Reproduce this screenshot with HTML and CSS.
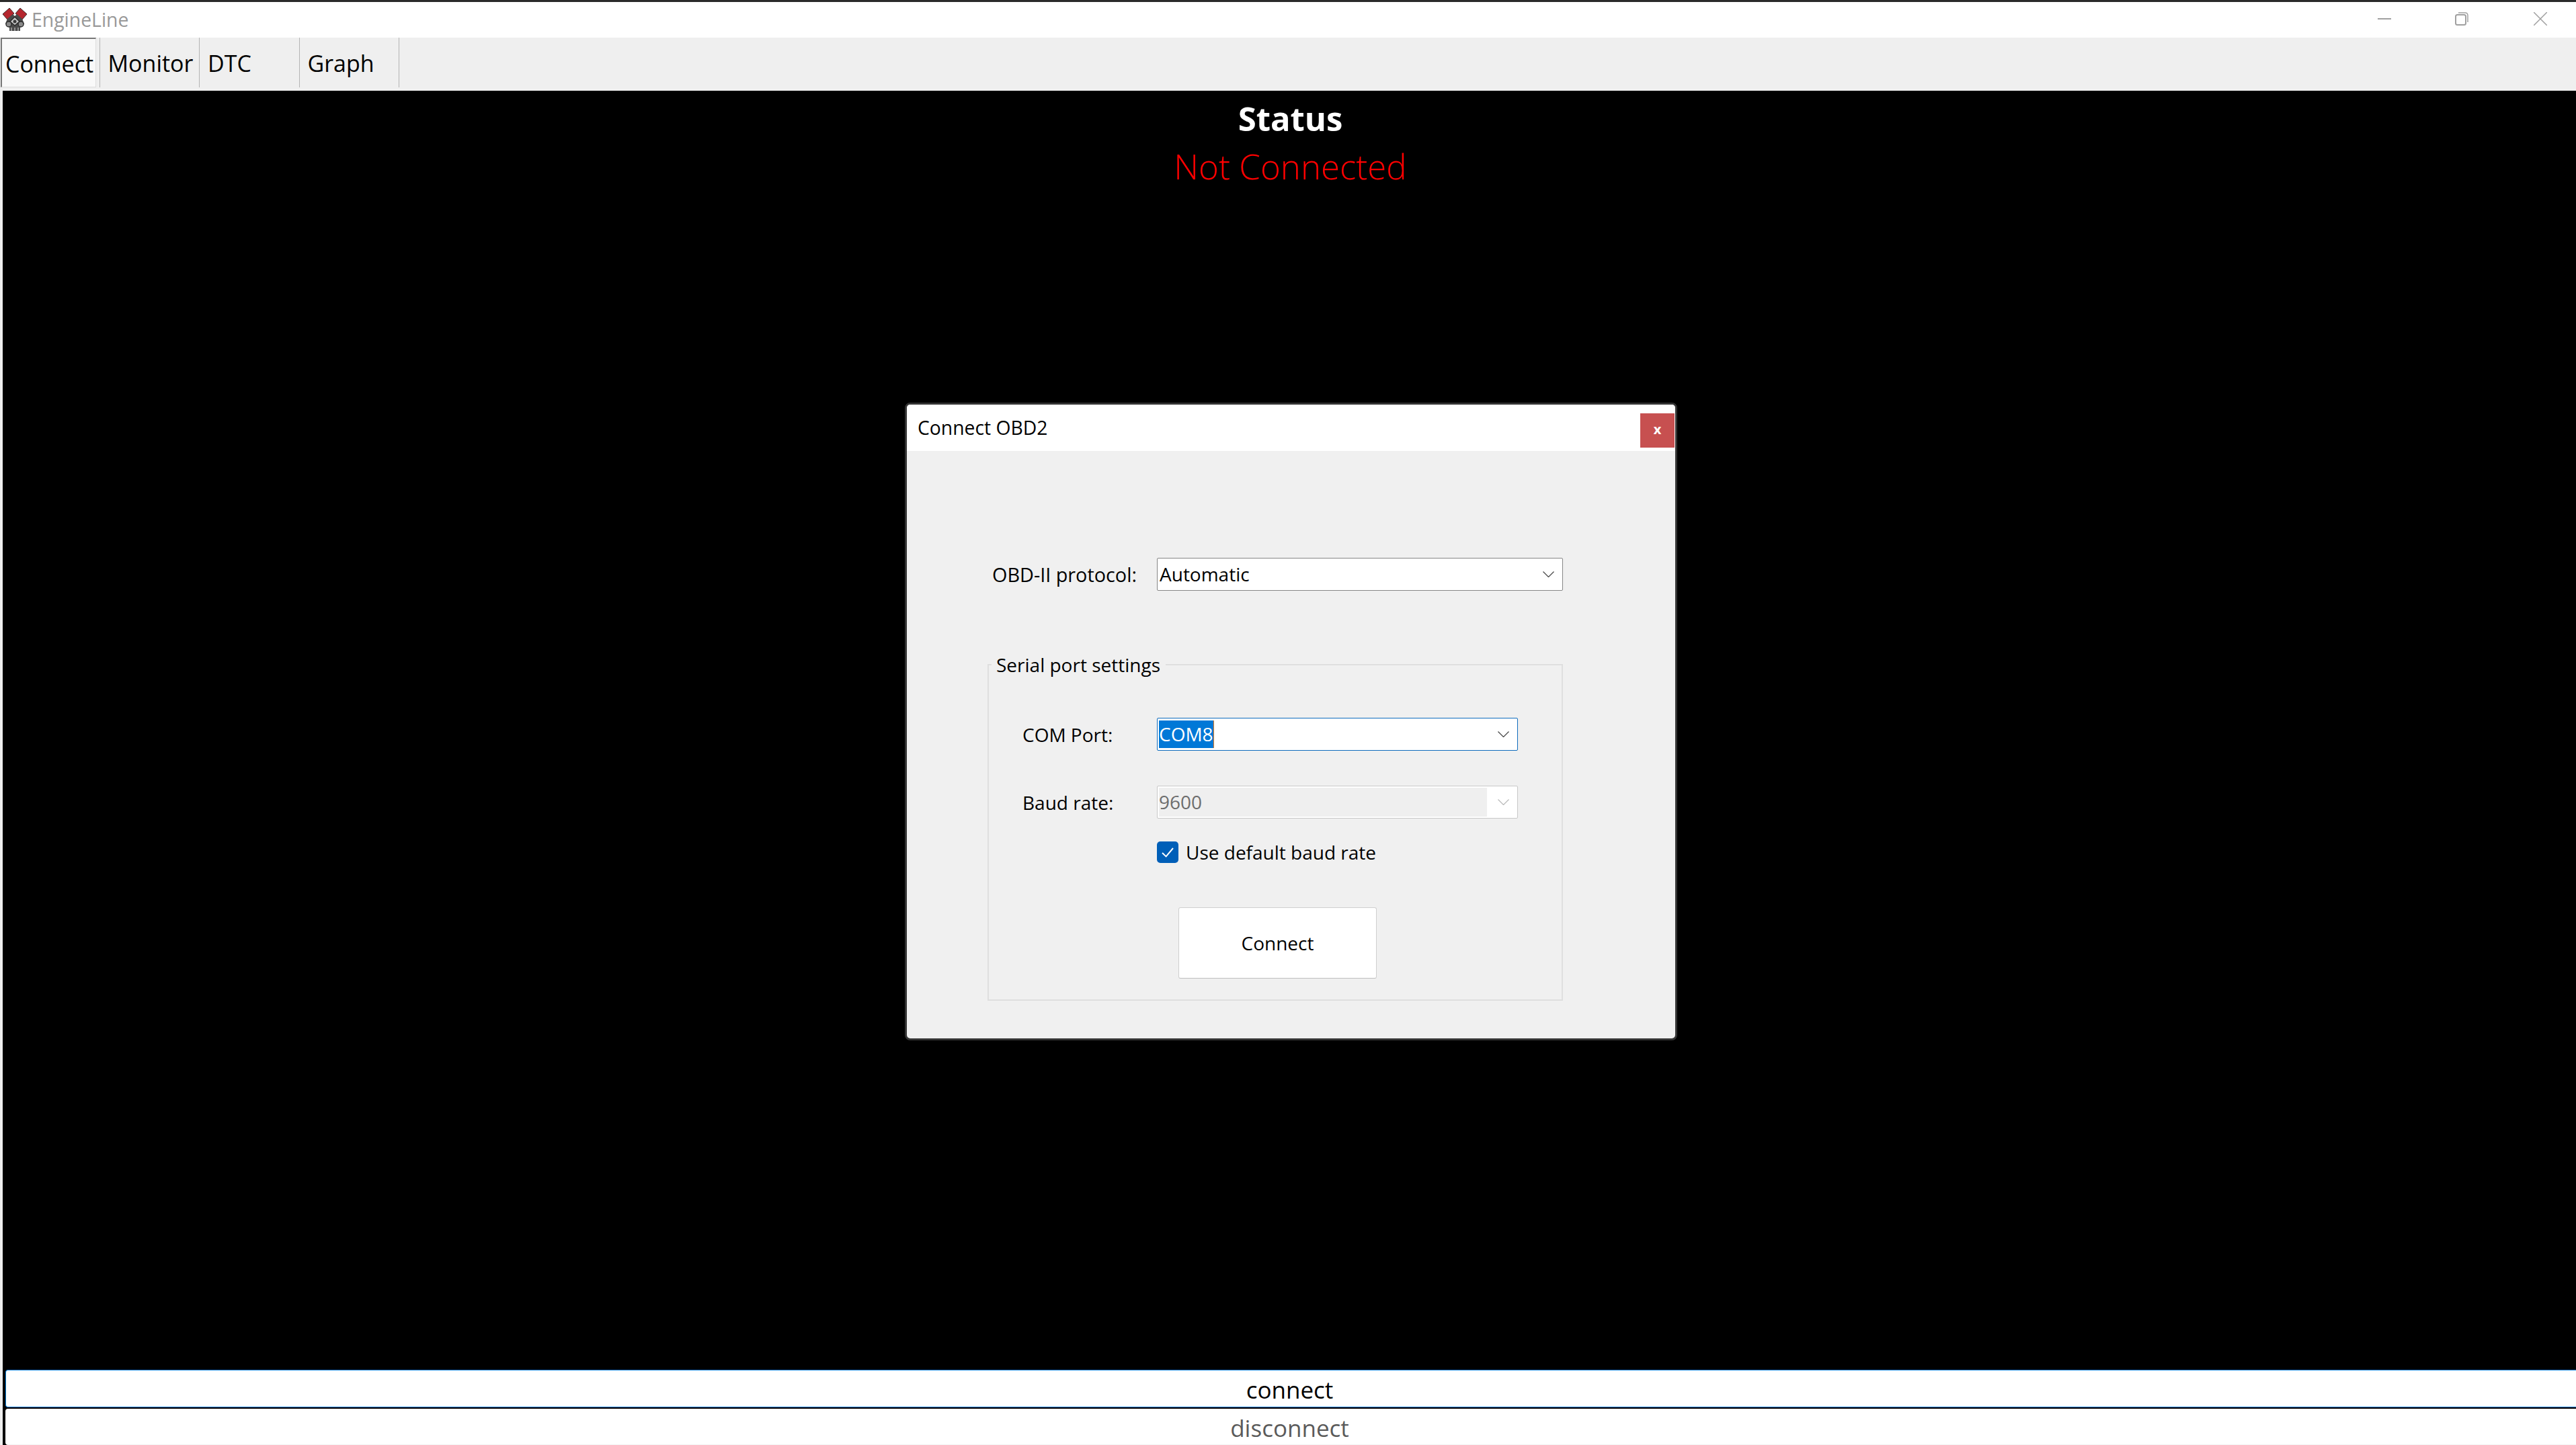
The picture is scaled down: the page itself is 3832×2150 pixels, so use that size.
FILE: index.html
```html
<!DOCTYPE html>
<html lang="en">
<head>
    <meta charset="UTF-8">
    <title>EngineLine</title>
    <link rel="stylesheet" href="styles.css">
</head>
<body>
    <header class="titlebar">
        <svg class="logo" viewBox="0 0 40 36">
            <path d="M2 10 L12 1 L19 9 L9 18 Z" fill="#b5262e" stroke="#3a2a2a" stroke-width="1"/>
            <path d="M38 10 L28 1 L21 9 L31 18 Z" fill="#b5262e" stroke="#3a2a2a" stroke-width="1"/>
            <path d="M9 17 L17 10 L20 13 L23 10 L31 17 L34 24 L28 30 L28 35 L12 35 L12 30 L6 24 Z" fill="#4a4a4a"/>
            <path d="M20 14 L27 21 L20 27 L13 21 Z" fill="#c8c8c8" stroke="#2c2c2c" stroke-width="1.5"/>
            <circle cx="11" cy="25" r="4" fill="#8a8a8a" stroke="#2c2c2c" stroke-width="1.5"/>
            <circle cx="29" cy="25" r="4" fill="#8a8a8a" stroke="#2c2c2c" stroke-width="1.5"/>
            <circle cx="20" cy="21" r="2.5" fill="#3a3a3a"/>
            <path d="M15 30 V35 M20 30 V35 M25 30 V35" stroke="#aaa" stroke-width="1.5"/>
        </svg>
        <span class="app-name">EngineLine</span>
        <div class="window-controls">
            <svg class="win-icon win-min" viewBox="0 0 20 20"><path d="M0 10 H20" stroke="#a0a0a0" stroke-width="2"/></svg>
            <svg class="win-icon win-restore" viewBox="0 0 20 20" fill="none" stroke="#a0a0a0">
                <rect x="1" y="4" width="15" height="15" rx="2.5" stroke-width="2"/>
                <path d="M5 1 H15 Q19 1 19 5 V15" stroke-width="1.5"/>
            </svg>
            <svg class="win-icon win-close" viewBox="0 0 20 20"><path d="M0 0 L20 20 M20 0 L0 20" stroke="#a0a0a0" stroke-width="1.5"/></svg>
        </div>
    </header>

    <nav class="tabs">
        <div class="tab tab-active"><span class="tab-face">Connect</span></div>
        <div class="tab">Monitor</div>
        <div class="tab">DTC</div>
        <div class="tab">Graph</div>
    </nav>

    <main class="content">
        <div class="status">
            <div class="status-title">Status</div>
            <div class="status-value">Not Connected</div>
        </div>
        <div class="actions">
            <button class="action action-connect">connect</button>
            <button class="action action-disconnect">disconnect</button>
        </div>
    </main>

    <!-- Connect dialog, floats over the main window -->
    <section class="dialog">
        <div class="dialog-head">
            <span class="dialog-title">Connect OBD2</span>
            <button class="dialog-close">x</button>
        </div>
        <div class="dialog-body">
            <div class="protocol-row">
                <label class="protocol-label">OBD-II protocol:</label>
                <div class="combo combo-wide">
                    <span class="combo-text">Automatic</span>
                    <svg class="chevron" viewBox="0 0 17 9"><path d="M0.5 0.5 L8.5 8.5 L16.5 0.5" fill="none" stroke="#444" stroke-width="1.2"/></svg>
                </div>
            </div>
            <fieldset class="group">
                <legend class="group-title">Serial port settings</legend>
                <div class="field">
                    <label class="field-label">COM Port:</label>
                    <div class="combo combo-focus">
                        <span class="combo-selected">COM8</span>
                        <svg class="chevron" viewBox="0 0 17 9"><path d="M0.5 0.5 L8.5 8.5 L16.5 0.5" fill="none" stroke="#444" stroke-width="1.2"/></svg>
                    </div>
                </div>
                <div class="field field-baud">
                    <label class="field-label">Baud rate:</label>
                    <div class="combo combo-disabled">
                        <span class="combo-fill">9600</span>
                        <svg class="chevron" viewBox="0 0 17 9"><path d="M0.5 0.5 L8.5 8.5 L16.5 0.5" fill="none" stroke="#b8b8b8" stroke-width="1.2"/></svg>
                    </div>
                </div>
                <div class="check-row">
                    <span class="checkbox">
                        <svg viewBox="0 0 16 16"><path d="M4 8.5 L6.8 11.2 L12 5" fill="none" stroke="#fff" stroke-width="1"/></svg>
                    </span>
                    <span>Use default baud rate</span>
                </div>
                <button class="connect-btn">Connect</button>
            </fieldset>
        </div>
    </section>
</body>
</html>
```

FILE: styles.css
```css
* {
    box-sizing: border-box;
}
html, body {
    margin: 0;
    height: 100%;
}
body {
    display: flex;
    flex-direction: column;
    height: 2150px;
    overflow: hidden;
    font-family: 'Open Sans', 'Noto Sans', sans-serif;
    background: #efefef;
    color: #000;
}
button {
    font-family: inherit;
    cursor: pointer;
}

/* window title bar */
.titlebar {
    display: flex;
    align-items: center;
    height: 56px;
    flex: none;
    background: #fff;
    border-top: 3px solid #2a2a2a;
    padding-left: 2px;
}
.logo {
    width: 40px;
    height: 36px;
    margin-top: -2px;
}
.app-name {
    margin-left: 5px;
    font-size: 28.4px;
    color: #999;
    margin-top: -2px;
}
.window-controls {
    margin-left: auto;
    display: flex;
    align-items: center;
    margin-top: -4px;
    padding-right: 43px;
}
.win-icon {
    width: 20px;
    height: 20px;
}
.win-restore {
    margin-left: 95px;
}
.win-close {
    margin-left: 97px;
}

/* tabs */
.tabs {
    display: flex;
    flex: none;
    height: 79px;
    padding: 0 0 5px 0;
    background: #efefef;
}
.tab {
    width: 148.5px;
    padding: 0 0 0 12px;
    border-right: 1px solid #b4b4b4;
    font-size: 34px;
    line-height: 77px;
}
.tab-active {
    padding: 0 5px 0 1px;
}
.tab-face {
    display: block;
    height: 74px;
    padding-left: 5px;
    background: #f9f9f9;
    border-top: 2px solid #777;
    border-left: 2px solid #777;
    border-right: 1px solid #ddd;
    border-bottom: 1px solid #ddd;
    line-height: 75px;
}

/* main black area */
.content {
    flex: 1;
    display: flex;
    flex-direction: column;
    margin-left: 4px;
    background: #000;
}
.status {
    flex: 1;
    padding-left: 3px;
    text-align: center;
}
.status-title {
    margin-top: 7px;
    font-size: 49px;
    font-weight: 700;
    line-height: 68px;
    color: #fff;
}
.status-value {
    margin-top: 4px;
    font-size: 51px;
    font-weight: 300;
    line-height: 66px;
    color: #f00;
}
.actions {
    display: flex;
    flex-direction: column;
    gap: 2px;
    padding-left: 4px;
}
.action {
    display: block;
    width: 100%;
    background: #fff;
    font-size: 35px;
    line-height: 1;
    padding: 3px 4px 0 0;
}
.action-connect {
    height: 56px;
    border: 1.5px solid #0078d4;
    border-right: none;
    border-radius: 4px 0 0 4px;
    color: #000;
    font-weight: 400;
}
.action-disconnect {
    height: 54px;
    border: 1px solid #f3f3f3;
    border-right: none;
    border-radius: 4px 0 0 4px;
    color: #5b5b5b;
    font-weight: 400;
}

/* dialog */
.dialog {
    position: absolute;
    left: 1346px;
    top: 599px;
    width: 1149px;
    height: 949px;
    background: #f0f0f0;
    border: 3px solid #333;
    border-radius: 8px;
    font-size: 28px;
}
.dialog-head {
    display: flex;
    justify-content: space-between;
    align-items: center;
    height: 69px;
    padding: 0 0 2px 16px;
    background: #fff;
    border-radius: 5px 5px 0 0;
}
.dialog-title {
    font-size: 28.3px;
}
.dialog-close {
    align-self: flex-start;
    width: 51px;
    height: 51px;
    margin: 13px 1px 0 0;
    padding: 0 0 4px 0;
    border: none;
    background: #c75050;
    color: #fff;
    font-size: 20px;
    font-weight: 700;
}
.dialog-body {
    padding: 159px 0 0 120px;
}
.protocol-row {
    display: flex;
    align-items: center;
    padding-left: 7px;
}
.protocol-label {
    width: 245px;
    font-size: 28.8px;
}
.combo {
    position: relative;
    display: flex;
    align-items: center;
    height: 49px;
    width: 537px;
    padding: 2px;
    background: #fff;
    border: 1.5px solid #868686;
    border-radius: 2px;
    line-height: 43px;
}
.combo-wide {
    width: 604px;
}
.combo-text {
    padding-left: 1px;
}
.combo-focus {
    border-color: #0f6cbd;
}
.combo-selected {
    height: 41px;
    line-height: 40px;
    color: #fff;
    background: #0078d7;
    border-right: 1px solid #e8791e;
}
.combo-disabled {
    border-color: #c8c8c8;
}
.combo-fill {
    width: 488px;
    height: 43px;
    color: #6d6d6d;
    background: #efefef;
}
.chevron {
    position: absolute;
    right: 12px;
    top: 19px;
    width: 17px;
    height: 9px;
}

/* serial port group */
.group {
    width: 856px;
    height: 516px;
    margin: 94px 0 0 0;
    padding: 0 0 0 50px;
    border: 2px solid #dfdfdf;
}
.group-title {
    margin-left: -46px;
    padding: 0 8px 0 7px;
    line-height: 32px;
    margin-bottom: 63px;
}
.field {
    display: flex;
    align-items: center;
}
.field-baud {
    margin-top: 52px;
}
.field-label {
    width: 200px;
}
.check-row {
    display: flex;
    align-items: center;
    gap: 11px;
    height: 32px;
    margin: 34px 0 0 200px;
}
.checkbox {
    width: 32px;
    height: 32px;
    background: #005fb8;
    border-radius: 5px;
}
.checkbox svg {
    display: block;
    width: 32px;
    height: 32px;
}
.connect-btn {
    display: block;
    width: 295px;
    height: 106px;
    margin: 66px 0 0 232px;
    background: #fff;
    border: 1px solid #d0d0d0;
    border-bottom-color: #bdbdbd;
    border-radius: 3px;
    font-size: 28px;
    color: #000;
}
```
